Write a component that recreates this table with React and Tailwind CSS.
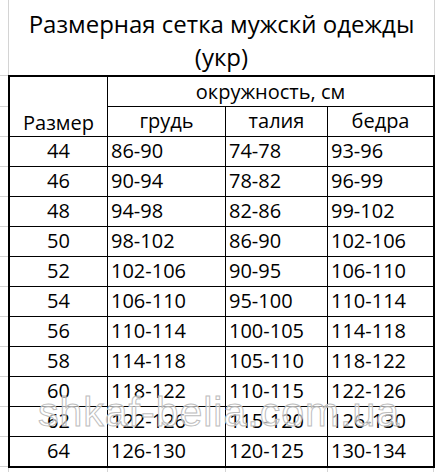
import React from 'react';

const rows = [
  ['44', '86-90', '74-78', '93-96'],
  ['46', '90-94', '78-82', '96-99'],
  ['48', '94-98', '82-86', '99-102'],
  ['50', '98-102', '86-90', '102-106'],
  ['52', '102-106', '90-95', '106-110'],
  ['54', '106-110', '95-100', '110-114'],
  ['56', '110-114', '100-105', '114-118'],
  ['58', '114-118', '105-110', '118-122'],
  ['60', '118-122', '110-115', '122-126'],
  ['62', '122-126', '115-120', '126-130'],
  ['64', '126-130', '120-125', '130-134'],
];

const font = { fontFamily: '"Open Sans", "Noto Sans", sans-serif' };

const App = () => {
  return (
    <div className='relative w-[437px] h-[472px] bg-white overflow-hidden flex text-black' style={font}>
      {/* column A gridlines */}
      <div className='w-[8px] flex flex-col'>
        <div className='h-[76px] border-b border-[#d4d4d4]'></div>
        <div className='h-[31px] border-b border-[#d4d4d4]'></div>
        {[...rows, []].map((_, i) => (
          <div key={i} className='h-[30px] border-b border-[#d4d4d4]'></div>
        ))}
      </div>

      <div className='w-[427px] flex flex-col'>
        {/* title */}
        <div className='h-[75px] border-x border-[#d4d4d4] pt-[7px] text-center text-[24px] leading-[33px]'>
          <div>Размерная сетка мужскй одежды</div>
          <div>(укр)</div>
        </div>

        {/* table */}
        <div className='border-2 border-black grid grid-cols-[97px_118px_102px_106px] grid-rows-[29px_30px] auto-rows-[30px] text-[20px] leading-none'>
          <div className='row-span-2 flex items-end justify-center pb-[3px]'>Размер</div>
          <div className='col-span-3 border-l border-black flex items-end justify-center pb-[4px]'>окружность, см</div>
          <div className='border-l border-t border-black flex items-end justify-center pb-[5px]'>грудь</div>
          <div className='border-l border-t border-black flex items-end justify-center pb-[5px]'>талия</div>
          <div className='border-l border-t border-black flex items-end justify-center pb-[5px]'>бедра</div>
          {rows.map((r) => (
            <React.Fragment key={r[0]}>
              <div className='border-t border-black flex items-end justify-center pb-[5px]'>{r[0]}</div>
              <div className='border-l border-t border-black flex items-end pl-[3px] pb-[5px]'>{r[1]}</div>
              <div className='border-l border-t border-black flex items-end pl-[3px] pb-[5px]'>{r[2]}</div>
              <div className='border-l border-t border-black flex items-end pl-[3px] pb-[5px]'>{r[3]}</div>
            </React.Fragment>
          ))}
        </div>

        {/* gridlines under the table */}
        <div className='flex-1 grid grid-cols-[99px_118px_102px_106px_2px]'>
          <div className='border-l border-[#d4d4d4]'></div>
          <div className='border-l border-[#d4d4d4]'></div>
          <div className='border-l border-[#d4d4d4]'></div>
          <div className='border-l border-[#d4d4d4]'></div>
          <div className='border-l border-[#d4d4d4]'></div>
        </div>
      </div>

      {/* watermark */}
      <div
        className='absolute left-[38px] top-[392px] text-[41px] leading-none tracking-[1px] text-[rgba(255,255,255,0.6)] [-webkit-text-stroke:1px_#bdbdbd] pointer-events-none select-none'
        style={{ fontFamily: '"Liberation Sans", Arial, sans-serif' }}
      >
        shkaf-belia.com.ua
      </div>
    </div>
  );
};

export default App;
